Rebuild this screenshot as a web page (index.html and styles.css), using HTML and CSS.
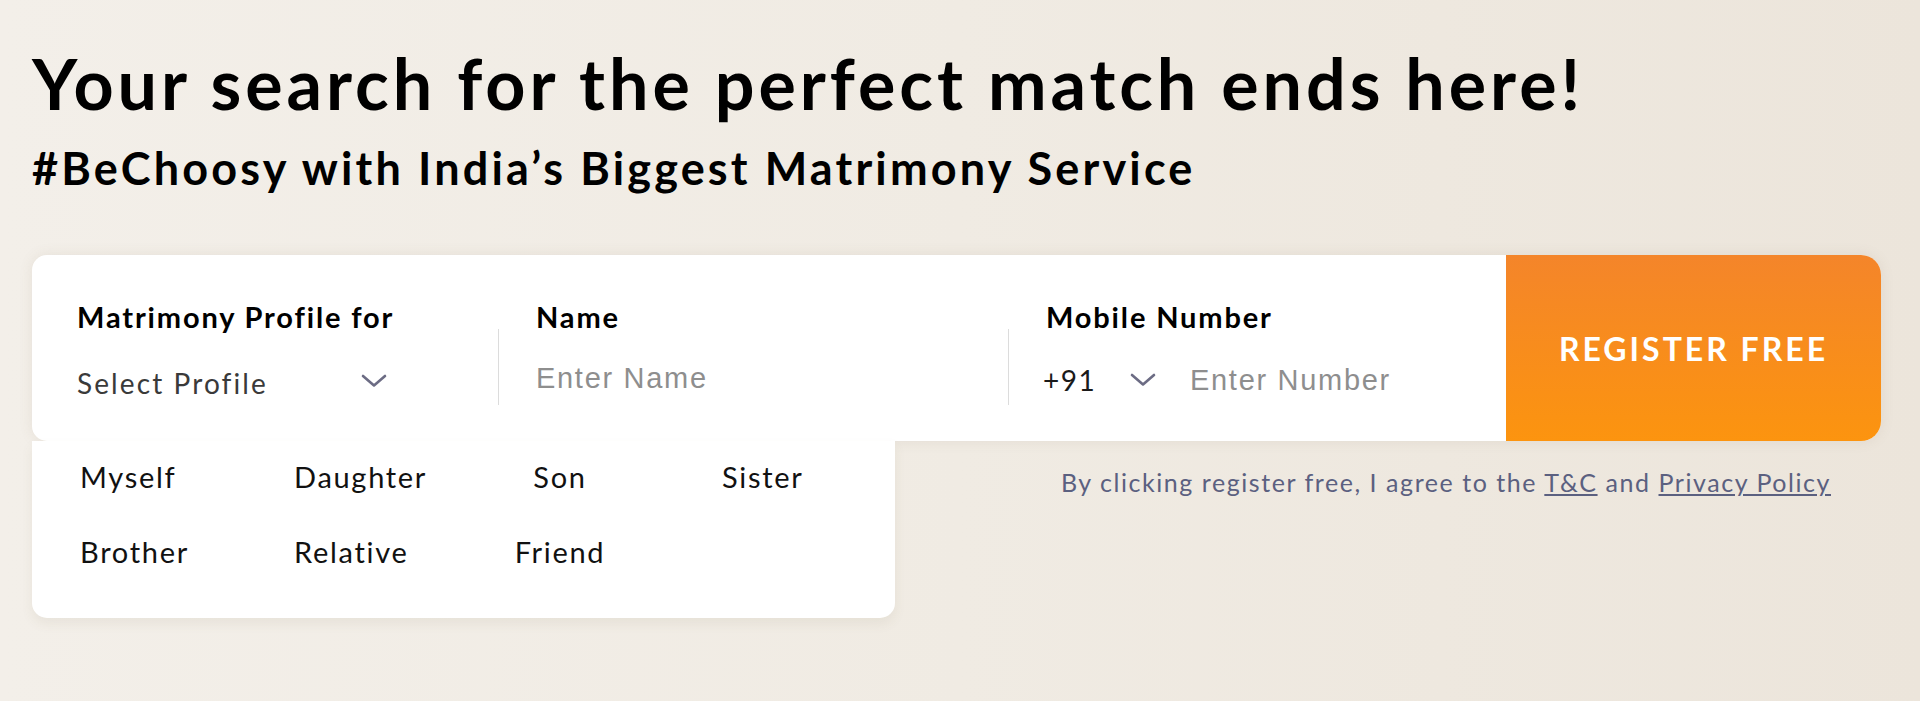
FILE: index.html
```html
<!DOCTYPE html>
<html>
<head>
	<title>Register</title>
	<meta charset="utf-8">
	<link rel="stylesheet" href="styles.css">
</head>
<body>
	<!--hero start-->
	<div class="hero">
		<h1 class="title">Your search for the perfect match ends here!</h1>
		<h2 class="subtitle">#BeChoosy with India’s Biggest Matrimony Service</h2>

		<form class="reg">
			<div class="reg_card">
				<div class="field f_profile">
					<label>Matrimony Profile for</label>
					<div class="val">
						<div class="select">
							<span>Select Profile</span>
							<svg class="chev" width="26" height="14" viewBox="0 0 26 14"><polyline points="2,2 13,11.5 24,2" fill="none" stroke="#6c6c84" stroke-width="2.6" stroke-linecap="round" stroke-linejoin="round"/></svg>
						</div>
					</div>
				</div>
				<div class="field f_name">
					<label>Name</label>
					<div class="val sep">
						<input type="text" placeholder="Enter Name">
					</div>
				</div>
				<div class="field f_mobile">
					<label>Mobile Number</label>
					<div class="val sep">
						<span class="code">+91</span>
						<svg class="chev" width="26" height="14" viewBox="0 0 26 14"><polyline points="2,2 13,11.5 24,2" fill="none" stroke="#6c6c84" stroke-width="2.6" stroke-linecap="round" stroke-linejoin="round"/></svg>
						<input type="text" class="num" placeholder="Enter Number">
					</div>
				</div>
				<button type="button" class="reg_btn">REGISTER FREE</button>

				<!--profile dropdown-->
				<ul class="drop">
					<li>Myself</li>
					<li>Daughter</li>
					<li>Son</li>
					<li>Sister</li>
					<li>Brother</li>
					<li>Relative</li>
					<li>Friend</li>
				</ul>
			</div>
			<p class="terms">By clicking register free, I agree to the <a href="#">T&amp;C</a> and <a href="#">Privacy Policy</a></p>
		</form>
	</div>
	<!--end hero-->
</body>
</html>
```

FILE: styles.css
```css
*{margin:0;padding:0;box-sizing:border-box;}
body{font-family:Lato,"Noto Sans",sans-serif;color:#000;background:linear-gradient(90deg,#f3efe9 0%,#f0ebe3 50%,#ece5db 100%);height:701px;overflow:hidden;}
/*hero start*/
.hero{padding:41px 39px 0 32px;}
.hero .title{font-size:70px;line-height:84px;font-weight:700;letter-spacing:3.95px;white-space:nowrap;}
.hero .subtitle{margin-top:17px;font-size:45px;line-height:52px;font-weight:700;letter-spacing:3.15px;white-space:nowrap;}

.reg{margin-top:61px;}
.reg_card{position:relative;display:flex;height:186px;padding-left:45px;background:#fff;border-radius:15px 20px 20px 15px;box-shadow:0 0 14px rgba(120,100,70,.10);}
.reg_card .field{padding-top:50px;}
.reg_card .field label{display:block;font-size:29px;line-height:24px;font-weight:700;letter-spacing:1.85px;color:#000;white-space:nowrap;}
.reg_card .field .val{display:flex;align-items:center;height:76px;padding-top:26px;}
.reg_card .sep{border-left:1px solid #dcdcdc;padding-left:37px;}
.reg_card .f_profile{width:421px;}
.reg_card .f_name{width:510px;}
.reg_card .f_name label,.reg_card .f_mobile label{padding-left:38px;}
.reg_card .f_mobile{flex:1;}

.select{display:flex;align-items:center;justify-content:space-between;width:310px;font-size:28px;line-height:32px;letter-spacing:2.1px;color:#3a3a3a;padding-top:5px;}
.select .chev{margin-top:-4px;}

.reg_card input{border:0;outline:0;background:none;height:34px;font-family:"Liberation Sans",Arial,sans-serif;font-size:29px;letter-spacing:1.7px;color:#333;}
.reg_card input::placeholder{color:#8e8e8e;}
.reg_card .f_name input{width:420px;margin-top:-3px;}
.reg_card .code{width:87px;font-size:28px;line-height:32px;letter-spacing:1.5px;color:#1a1a1a;margin-left:-3px;}
.reg_card .num{width:280px;margin-left:34px;}

.reg_btn{width:375px;border:0;border-radius:0 20px 20px 0;background:linear-gradient(180deg,#f4852a 0%,#fc940f 100%);color:#fff;font-family:Lato,sans-serif;font-size:32px;font-weight:700;letter-spacing:3px;cursor:pointer;}

/*profile dropdown*/
.drop{position:absolute;top:100%;left:0;width:863px;padding:20px 48px 50px;background:#fff;border-radius:0 0 15px 15px;box-shadow:0 6px 12px rgba(120,100,70,.08);list-style:none;display:grid;grid-template-columns:214px 214px 104px 1fr;row-gap:43px;}
.drop li{font-size:29px;line-height:32px;letter-spacing:1.7px;color:#111;cursor:pointer;white-space:nowrap;}
.drop li:nth-child(3),.drop li:nth-child(7){text-align:center;}
.drop li:nth-child(4){padding-left:110px;}

.terms{margin-top:27px;padding-right:50px;text-align:right;font-size:25px;line-height:28px;letter-spacing:1.55px;color:#5b6080;}
.terms a{color:#5b6080;}
/*end hero*/
```
